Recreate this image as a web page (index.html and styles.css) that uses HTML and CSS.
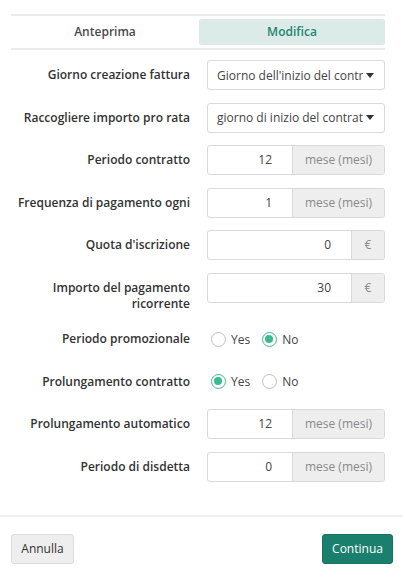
FILE: index.html
```html
<!DOCTYPE html>
<html>
<head>
<meta charset="utf-8">
<link rel="stylesheet" href="styles.css">
</head>
<body>
<div class="page">
  <div class="tabs">
    <div class="tab">Anteprima</div>
    <div class="tab active">Modifica</div>
  </div>
  <form class="form">
    <div class="row">
      <label class="lbl">Giorno creazione fattura</label>
      <div class="select"><span class="sel-text">Giorno dell'inizio del contratto</span><span class="caret"></span></div>
    </div>
    <div class="row">
      <label class="lbl">Raccogliere importo pro rata</label>
      <div class="select"><span class="sel-text">giorno di inizio del contratto</span><span class="caret"></span></div>
    </div>
    <div class="row">
      <label class="lbl">Periodo contratto</label>
      <div class="group"><div class="inp">12</div><div class="addon wide">mese (mesi)</div></div>
    </div>
    <div class="row">
      <label class="lbl">Frequenza di pagamento ogni</label>
      <div class="group"><div class="inp">1</div><div class="addon wide">mese (mesi)</div></div>
    </div>
    <div class="row">
      <label class="lbl">Quota d'iscrizione</label>
      <div class="group"><div class="inp">0</div><div class="addon eur">€</div></div>
    </div>
    <div class="row">
      <label class="lbl">Importo del pagamento ricorrente</label>
      <div class="group"><div class="inp">30</div><div class="addon eur">€</div></div>
    </div>
    <div class="row">
      <label class="lbl">Periodo promozionale</label>
      <div class="radios">
        <span class="opt"><span class="radio"></span>Yes</span>
        <span class="opt"><span class="radio on"></span>No</span>
      </div>
    </div>
    <div class="row">
      <label class="lbl">Prolungamento contratto</label>
      <div class="radios">
        <span class="opt"><span class="radio on"></span>Yes</span>
        <span class="opt"><span class="radio"></span>No</span>
      </div>
    </div>
    <div class="row">
      <label class="lbl">Prolungamento automatico</label>
      <div class="group"><div class="inp">12</div><div class="addon wide">mese (mesi)</div></div>
    </div>
    <div class="row">
      <label class="lbl">Periodo di disdetta</label>
      <div class="group"><div class="inp">0</div><div class="addon wide">mese (mesi)</div></div>
    </div>
  </form>
  <div class="footer">
    <button class="btn cancel" type="button">Annulla</button>
    <button class="btn primary" type="button">Continua</button>
  </div>
</div>
</body>
</html>
```
FILE: styles.css
```css
* { box-sizing: border-box; }
html, body { margin: 0; padding: 0; background: #fff; }
body {
  font-family: "Open Sans", "Liberation Sans", sans-serif;
  font-size: 12px;
  color: #333;
  width: 403px;
  height: 576px;
  overflow: hidden;
}
.page { padding-top: 14px; }
.tabs {
  margin: 0 18px 0 11px;
  border-top: 2px solid #ebebeb;
  border-bottom: 2px solid #ebebeb;
  padding: 3px 0 3px 0;
  display: grid;
  grid-template-columns: 188px 1fr;
}
.tab {
  height: 26px;
  line-height: 26px;
  text-align: center;
  font-weight: 600;
  color: #4a4a4a;
  border-radius: 3px;
}
.tab.active {
  background: #dcebe8;
  color: #22866f;
}
.form {
  margin: 10px 18px 0 11px;
  display: flex;
  flex-direction: column;
  gap: 12.5px;
}
.row {
  display: grid;
  grid-template-columns: 179px 178px;
  column-gap: 17px;
  align-items: start;
}
.lbl {
  text-align: right;
  font-weight: 600;
  color: #333;
  padding-top: 7px;
  line-height: 16px;
}
.select {
  height: 30px;
  border: 1px solid #d9d9d9;
  border-radius: 3px;
  display: flex;
  align-items: center;
  padding: 0 10px 0 9px;
  color: #444;
}
.sel-text {
  flex: 1;
  white-space: nowrap;
  overflow: hidden;
}
.caret {
  width: 0; height: 0;
  margin-left: 3px;
  border-left: 4px solid transparent;
  border-right: 4px solid transparent;
  border-top: 5px solid #333;
}
.group {
  height: 30px;
  display: flex;
  border: 1px solid #d9d9d9;
  border-radius: 3px;
  overflow: hidden;
}
.inp {
  flex: 1;
  text-align: right;
  padding-right: 20px;
  line-height: 28px;
  color: #444;
}
.addon {
  background: #eeeeee;
  border-left: 1px solid #d9d9d9;
  color: #8a8a8a;
  line-height: 28px;
  text-align: center;
}
.addon.wide { width: 92px; }
.addon.eur { width: 33px; }
.radios {
  height: 30px;
  display: flex;
  align-items: center;
  gap: 12px;
  padding-left: 4px;
  color: #444;
}
.opt { display: inline-flex; align-items: center; gap: 5px; }
.radio {
  width: 15px; height: 15px;
  border-radius: 50%;
  border: 1.5px solid #bdbdbd;
  display: inline-block;
  position: relative;
}
.radio.on { border-color: #3dba8c; }
.radio.on::after {
  content: "";
  position: absolute;
  left: 2px; top: 2px;
  width: 8px; height: 8px;
  border-radius: 50%;
  background: #3dba8c;
}
.footer {
  margin-top: 33px;
  border-top: 2px solid #efefef;
  padding: 17px 10px 0 11px;
  display: flex;
  justify-content: space-between;
}
.btn {
  font-family: inherit;
  font-size: 12px;
  height: 30px;
  border-radius: 3px;
  padding: 0 8px;
  cursor: pointer;
}
.btn.cancel {
  background: #eeeeee;
  border: 1px solid #dcdcdc;
  color: #333;
  width: 63px;
}
.btn.primary {
  background: #1a7f6d;
  border: 1px solid #177262;
  color: #fff;
  width: 71px;
}
```
